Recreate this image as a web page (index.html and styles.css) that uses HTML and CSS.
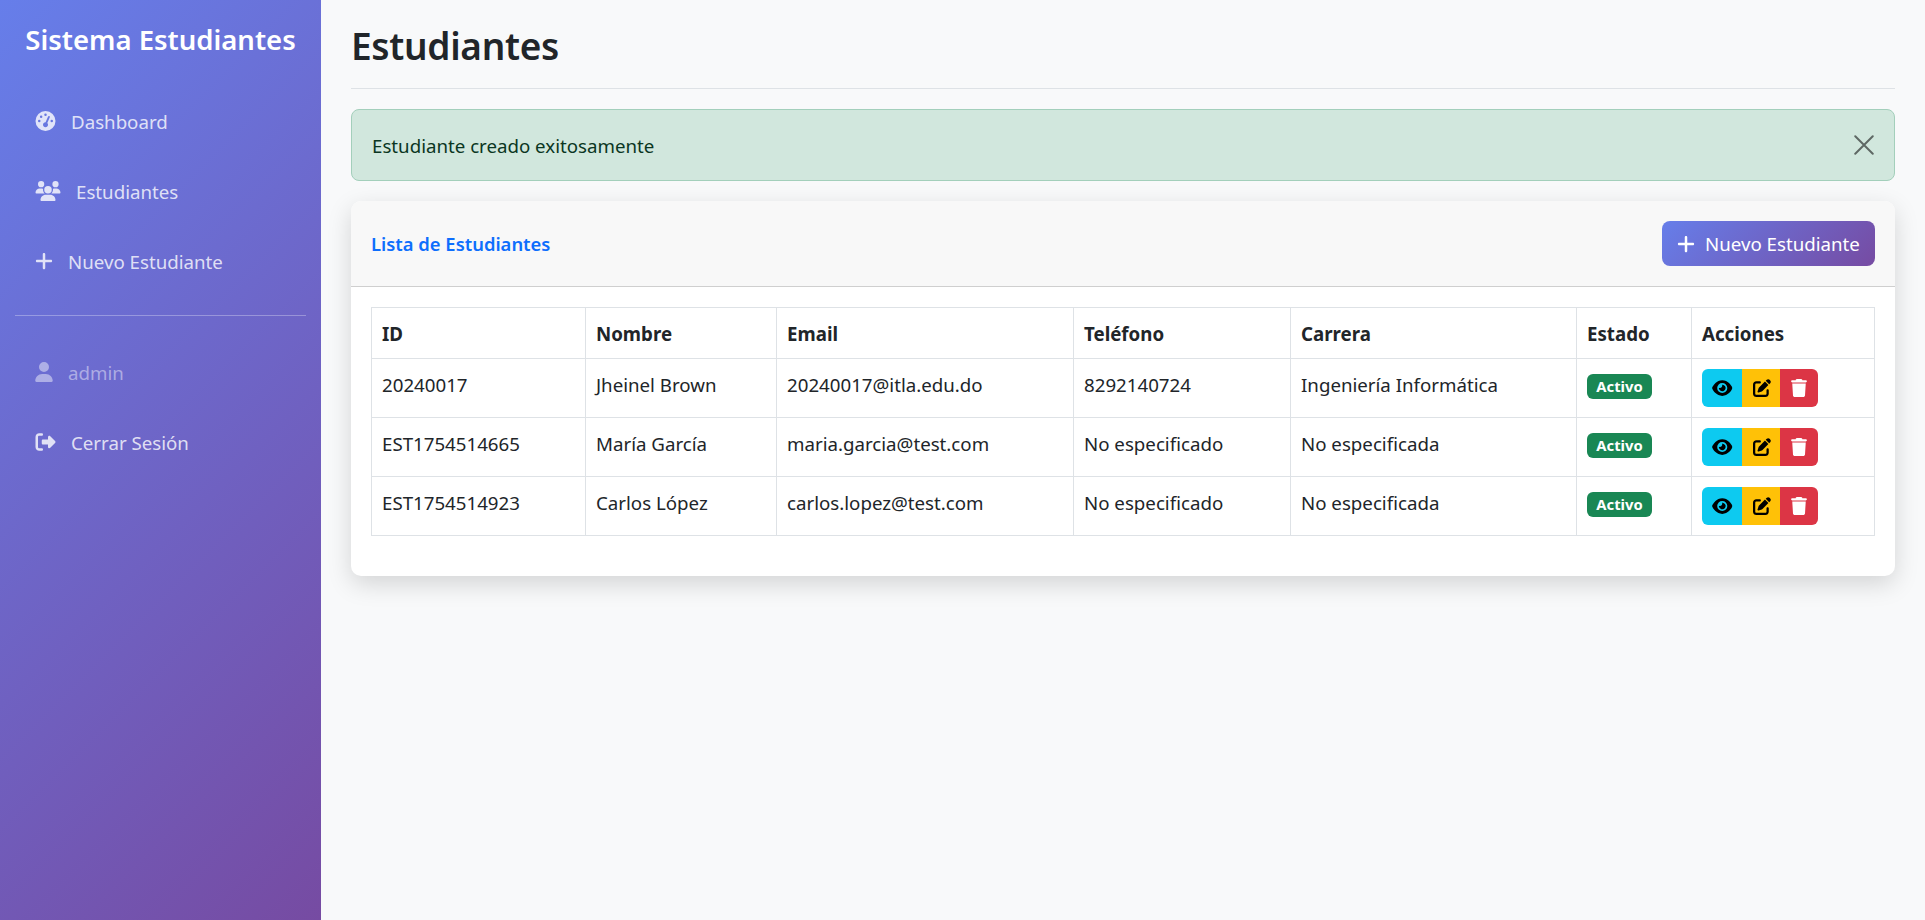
FILE: index.html
```html
<!DOCTYPE html>
<html lang="es">
<head>
    <meta charset="UTF-8">
    <meta name="viewport" content="width=device-width, initial-scale=1.0">
    <title>Estudiantes</title>
    <link rel="stylesheet" href="styles.css">
</head>
<body>
    <svg class="icon-defs" aria-hidden="true">
        <symbol id="i-gauge" viewBox="0 0 512 512"><path d="M0 256a256 256 0 1 1 512 0A256 256 0 1 1 0 256zM288 96a32 32 0 1 0 -64 0 32 32 0 1 0 64 0zM256 416c35.3 0 64-28.7 64-64c0-17.4-6.9-33.1-18.1-44.6L366 161.7c5.3-12.1-.2-26.3-12.3-31.6s-26.3 .2-31.6 12.3L257.9 288c-.6 0-1.3 0-1.9 0c-35.3 0-64 28.7-64 64s28.7 64 64 64zM176 144a32 32 0 1 0 -64 0 32 32 0 1 0 64 0zM96 288a32 32 0 1 0 0-64 32 32 0 1 0 0 64zm352-32a32 32 0 1 0 -64 0 32 32 0 1 0 64 0z"/></symbol>
        <symbol id="i-users" viewBox="0 0 640 512"><path d="M144 0a80 80 0 1 1 0 160A80 80 0 1 1 144 0zM512 0a80 80 0 1 1 0 160A80 80 0 1 1 512 0zM0 298.7C0 239.8 47.8 192 106.7 192h42.7c15.9 0 31 3.5 44.6 9.7c-1.3 7.2-1.9 14.7-1.9 22.3c0 38.2 16.8 72.5 43.3 96c-.2 0-.4 0-.7 0H21.3C9.6 320 0 310.4 0 298.7zM405.3 320c-.2 0-.4 0-.7 0c26.6-23.5 43.3-57.8 43.3-96c0-7.6-.7-15-1.9-22.3c13.6-6.3 28.7-9.7 44.6-9.7h42.7C592.2 192 640 239.8 640 298.7c0 11.8-9.6 21.3-21.3 21.3H405.3zM224 224a96 96 0 1 1 192 0 96 96 0 1 1 -192 0zM128 485.3C128 411.7 187.7 352 261.3 352H378.7C452.3 352 512 411.7 512 485.3c0 14.7-11.9 26.7-26.7 26.7H154.7c-14.7 0-26.7-11.9-26.7-26.7z"/></symbol>
        <symbol id="i-plus" viewBox="0 0 448 512"><path d="M256 80c0-17.7-14.3-32-32-32s-32 14.3-32 32V224H48c-17.7 0-32 14.3-32 32s14.3 32 32 32H192V432c0 17.7 14.3 32 32 32s32-14.3 32-32V288H400c17.7 0 32-14.3 32-32s-14.3-32-32-32H256V80z"/></symbol>
        <symbol id="i-user" viewBox="0 0 448 512"><path d="M224 256A128 128 0 1 0 224 0a128 128 0 1 0 0 256zm-45.7 48C79.8 304 0 383.8 0 482.3C0 498.7 13.3 512 29.7 512H418.3c16.4 0 29.7-13.3 29.7-29.7C448 383.8 368.2 304 269.7 304H178.3z"/></symbol>
        <symbol id="i-signout" viewBox="0 0 512 512"><path d="M377.9 105.9L500.7 228.7c7.2 7.2 11.3 17.1 11.3 27.3s-4.1 20.1-11.3 27.3L377.9 406.1c-6.4 6.4-15 9.9-24 9.9c-18.7 0-33.9-15.2-33.9-33.9l0-62.1-128 0c-17.7 0-32-14.3-32-32l0-64c0-17.7 14.3-32 32-32l128 0 0-62.1c0-18.7 15.2-33.9 33.9-33.9c9 0 17.6 3.6 24 9.9zM160 96L96 96c-17.7 0-32 14.3-32 32l0 256c0 17.7 14.3 32 32 32l64 0c17.7 0 32 14.3 32 32s-14.3 32-32 32l-64 0c-53 0-96-43-96-96L0 128C0 75 43 32 96 32l64 0c17.7 0 32 14.3 32 32s-14.3 32-32 32z"/></symbol>
        <symbol id="i-eye" viewBox="0 0 576 512"><path d="M288 32c-80.8 0-145.5 36.8-192.6 80.6C48.6 156 17.3 208 2.5 243.7c-3.3 7.9-3.3 16.7 0 24.6C17.3 304 48.6 356 95.4 399.4C142.5 443.2 207.2 480 288 480s145.5-36.8 192.6-80.6c46.8-43.5 78.1-95.4 93-131.1c3.3-7.9 3.3-16.7 0-24.6c-14.9-35.7-46.2-87.7-93-131.1C433.5 68.8 368.8 32 288 32zM144 256a144 144 0 1 1 288 0 144 144 0 1 1 -288 0zm144-64c0 35.3-28.7 64-64 64c-7.1 0-13.9-1.2-20.3-3.3c-5.5-1.8-11.9 1.6-11.7 7.4c.3 6.9 1.3 13.8 3.2 20.7c13.7 51.2 66.4 81.6 117.6 67.9s81.6-66.4 67.9-117.6c-11.1-41.5-47.8-69.4-88.6-71.1c-5.8-.2-9.2 6.1-7.4 11.7c2.1 6.4 3.3 13.2 3.3 20.3z"/></symbol>
        <symbol id="i-edit" viewBox="0 0 512 512"><path d="M471.6 21.7c-21.9-21.9-57.3-21.9-79.2 0L362.3 51.7l97.9 97.9 30.1-30.1c21.9-21.9 21.9-57.3 0-79.2L471.6 21.7zm-299.2 220c-6.1 6.1-10.8 13.6-13.5 21.9l-29.6 88.8c-2.9 8.6-.6 18.1 5.8 24.6s15.9 8.7 24.6 5.8l88.8-29.6c8.2-2.7 15.7-7.4 21.9-13.5L437.7 172.3 339.7 74.3 172.4 241.7zM96 64C43 64 0 107 0 160V416c0 53 43 96 96 96H352c53 0 96-43 96-96V320c0-17.7-14.3-32-32-32s-32 14.3-32 32v96c0 17.7-14.3 32-32 32H96c-17.7 0-32-14.3-32-32V160c0-17.7 14.3-32 32-32h96c17.7 0 32-14.3 32-32s-14.3-32-32-32H96z"/></symbol>
        <symbol id="i-trash" viewBox="0 0 448 512"><path d="M135.2 17.7L128 32H32C14.3 32 0 46.3 0 64S14.3 96 32 96H416c17.7 0 32-14.3 32-32s-14.3-32-32-32H320l-7.2-14.3C307.4 6.8 296.3 0 284.2 0H163.8c-12.1 0-23.2 6.8-28.6 17.7zM416 128H32L53.2 467c1.6 25.3 22.6 45 47.9 45H346.9c25.3 0 46.3-19.7 47.9-45L416 128z"/></symbol>
    </svg>

    <div class="layout">
        <aside class="sidebar">
            <h3 class="brand">Sistema Estudiantes</h3>
            <nav class="side-nav">
                <a class="nav-link" href="#"><svg class="ic ic-gauge"><use href="#i-gauge"/></svg>Dashboard</a>
                <a class="nav-link" href="#"><svg class="ic ic-users"><use href="#i-users"/></svg>Estudiantes</a>
                <a class="nav-link" href="#"><svg class="ic ic-plus"><use href="#i-plus"/></svg>Nuevo Estudiante</a>
                <hr class="side-rule">
                <span class="nav-link nav-user"><svg class="ic ic-user"><use href="#i-user"/></svg>admin</span>
                <a class="nav-link" href="#"><svg class="ic ic-signout"><use href="#i-signout"/></svg>Cerrar Sesión</a>
            </nav>
        </aside>

        <main class="content">
            <h1 class="page-title">Estudiantes</h1>

            <div class="alert">
                <span>Estudiante creado exitosamente</span>
                <button class="alert-close" type="button" aria-label="Cerrar">
                    <svg viewBox="0 0 16 16"><path d="M1 1l14 14M15 1L1 15"/></svg>
                </button>
            </div>

            <section class="card">
                <div class="card-header">
                    <h6 class="card-title">Lista de Estudiantes</h6>
                    <a class="btn-new" href="#"><svg class="ic-new"><use href="#i-plus"/></svg>Nuevo Estudiante</a>
                </div>
                <div class="card-body">
                    <table class="students">
                        <colgroup>
                            <col class="col-id"><col class="col-name"><col class="col-email"><col class="col-phone">
                            <col class="col-career"><col class="col-state"><col class="col-actions">
                        </colgroup>
                        <thead>
                            <tr><th>ID</th><th>Nombre</th><th>Email</th><th>Teléfono</th><th>Carrera</th><th>Estado</th><th>Acciones</th></tr>
                        </thead>
                        <tbody>
                            <tr>
                                <td>20240017</td><td>Jheinel Brown</td><td>20240017@itla.edu.do</td><td>8292140724</td><td>Ingeniería Informática</td>
                                <td class="cell-badge"><span class="badge">Activo</span></td>
                                <td class="cell-actions"><div class="btn-group">
                                    <a class="act act-view" href="#"><svg class="ic-eye"><use href="#i-eye"/></svg></a>
                                    <a class="act act-edit" href="#"><svg class="ic-act"><use href="#i-edit"/></svg></a>
                                    <a class="act act-del" href="#"><svg class="ic-act"><use href="#i-trash"/></svg></a>
                                </div></td>
                            </tr>
                            <tr>
                                <td>EST1754514665</td><td>María García</td><td>maria.garcia@test.com</td><td>No especificado</td><td>No especificada</td>
                                <td class="cell-badge"><span class="badge">Activo</span></td>
                                <td class="cell-actions"><div class="btn-group">
                                    <a class="act act-view" href="#"><svg class="ic-eye"><use href="#i-eye"/></svg></a>
                                    <a class="act act-edit" href="#"><svg class="ic-act"><use href="#i-edit"/></svg></a>
                                    <a class="act act-del" href="#"><svg class="ic-act"><use href="#i-trash"/></svg></a>
                                </div></td>
                            </tr>
                            <tr>
                                <td>EST1754514923</td><td>Carlos López</td><td>carlos.lopez@test.com</td><td>No especificado</td><td>No especificada</td>
                                <td class="cell-badge"><span class="badge">Activo</span></td>
                                <td class="cell-actions"><div class="btn-group">
                                    <a class="act act-view" href="#"><svg class="ic-eye"><use href="#i-eye"/></svg></a>
                                    <a class="act act-edit" href="#"><svg class="ic-act"><use href="#i-edit"/></svg></a>
                                    <a class="act act-del" href="#"><svg class="ic-act"><use href="#i-trash"/></svg></a>
                                </div></td>
                            </tr>
                        </tbody>
                    </table>
                </div>
            </section>
        </main>
    </div>
</body>
</html>
```

FILE: styles.css
```css
* {
    box-sizing: border-box;
}
body {
    margin: 0;
    font-family: "Noto Sans", "Open Sans", sans-serif;
    font-size: 18.7px;
    color: #212529;
    background-color: #f8f9fa;
}
a {
    text-decoration: none;
}
.icon-defs {
    display: none;
}
.layout {
    display: flex;
    min-height: 920px;
}

/* sidebar */
.sidebar {
    width: 321px;
    flex-shrink: 0;
    background: linear-gradient(135deg, #667eea 0%, #764ba2 100%);
    color: #fff;
    padding: 20px 15px;
}
.brand {
    margin: 0 0 31px;
    font-size: 27.5px;
    line-height: 40px;
    font-weight: 600;
    text-align: center;
}
.side-nav {
    display: flex;
    flex-direction: column;
}
.nav-link {
    display: flex;
    align-items: center;
    height: 60px;
    margin-bottom: 10px;
    padding-left: 20px;
    color: rgba(255, 255, 255, 0.8);
}
.nav-user {
    color: rgba(255, 255, 255, 0.45);
}
.ic {
    fill: currentColor;
    height: 20px;
}
.ic-gauge { width: 21px; margin-right: 15px; }
.ic-users { width: 26px; margin-right: 15px; }
.ic-plus { width: 18px; margin-right: 15px; }
.ic-user { width: 18px; margin-right: 15px; }
.ic-signout { width: 21px; margin-right: 15px; }
.side-rule {
    width: 291px;
    margin: 14px 0 26px;
    border: 0;
    border-top: 1px solid rgba(255, 255, 255, 0.3);
}

/* main */
.content {
    flex: 1;
    padding: 0 30px;
}
.page-title {
    margin: 0 0 20px;
    height: 89px;
    padding-top: 18px;
    font-size: 37px;
    line-height: 56px;
    letter-spacing: -0.3px;
    font-weight: 600;
    border-bottom: 1px solid #dee2e6;
}
.alert {
    display: flex;
    justify-content: space-between;
    align-items: center;
    height: 72px;
    margin-bottom: 20px;
    padding: 0 19px 0 20px;
    background: #d1e7dd;
    border: 1px solid #a3cfbb;
    border-radius: 8px;
    color: #0a3622;
}
.alert-close {
    width: 22px;
    height: 22px;
    padding: 1px;
    border: 0;
    background: none;
    cursor: pointer;
}
.alert-close svg {
    display: block;
    width: 20px;
    height: 20px;
    fill: none;
    stroke: #000;
    stroke-opacity: 0.55;
    stroke-width: 1.6;
    stroke-linecap: round;
}

/* card */
.card {
    background: #fff;
    border-radius: 10px;
    box-shadow: 0 8px 25px rgba(0, 0, 0, 0.15);
    overflow: hidden;
}
.card-header {
    display: flex;
    justify-content: space-between;
    align-items: center;
    height: 86px;
    padding: 0 20px;
    background: #f8f8f8;
    border-bottom: 1px solid #cfcfcf;
}
.card-title {
    margin: 0;
    font-size: 18.4px;
    font-weight: 600;
    color: #0d6efd;
}
.btn-new {
    display: flex;
    align-items: center;
    height: 45px;
    width: 213px;
    padding-left: 15px;
    border-radius: 8px;
    background: linear-gradient(135deg, #667eea 0%, #764ba2 100%);
    color: #fff;
}
.ic-new {
    width: 18px;
    height: 20px;
    margin-right: 10px;
    fill: #fff;
}
.card-body {
    padding: 20px 20px 40px;
}

/* table */
.students {
    width: 100%;
    table-layout: fixed;
    border-collapse: collapse;
}
.col-id { width: 214px; }
.col-name { width: 191px; }
.col-email { width: 297px; }
.col-phone { width: 217px; }
.col-career { width: 286px; }
.col-state { width: 115px; }
.students th,
.students td {
    border: 1px solid #dee2e6;
    padding: 0 10px;
    text-align: left;
    vertical-align: middle;
    white-space: nowrap;
}
.students th {
    height: 51px;
    font-weight: 700;
}
.students td {
    height: 59px;
    padding-bottom: 7px;
}
.students td.cell-badge {
    padding-bottom: 3px;
}
.students td.cell-actions {
    padding-bottom: 0;
}
.badge {
    display: block;
    width: 65px;
    height: 25px;
    line-height: 25px;
    border-radius: 6px;
    background: #198754;
    color: #fff;
    font-size: 14.8px;
    font-weight: 700;
    text-align: center;
}
.btn-group {
    display: flex;
    width: 116px;
    height: 38px;
    border-radius: 6px;
    overflow: hidden;
}
.act {
    display: flex;
    align-items: center;
    justify-content: center;
    width: 38px;
    color: #000;
}
.act-view { width: 40px; padding-left: 1px; background: #0dcaf0; }
.act-edit { padding-left: 2px; background: #ffc107; }
.act-del { background: #dc3545; color: #fff; }
.ic-eye {
    width: 20.5px;
    height: 18px;
    fill: currentColor;
}
.ic-act {
    width: 18px;
    height: 18px;
    fill: currentColor;
}
```
